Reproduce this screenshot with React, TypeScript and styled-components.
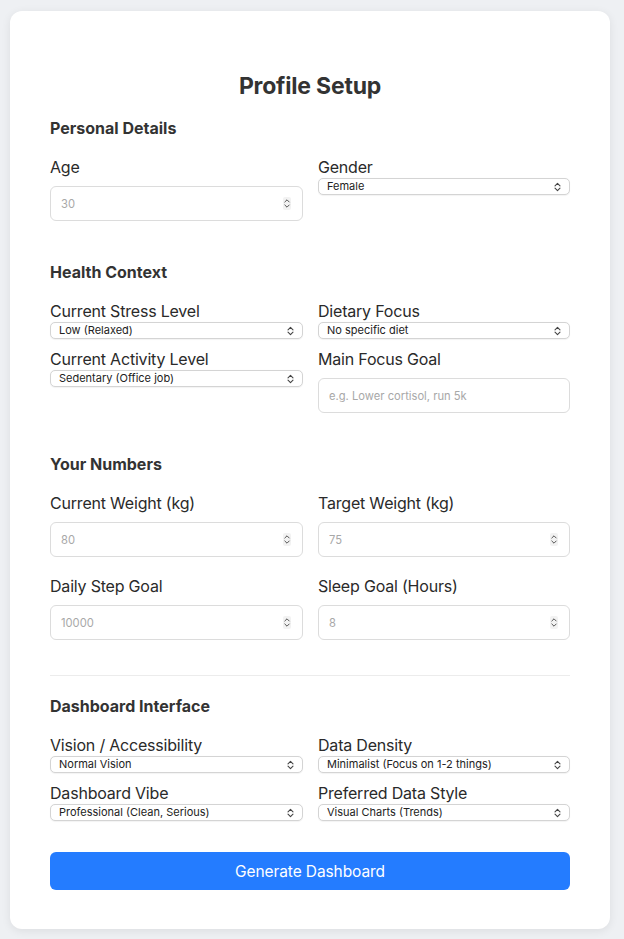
import React from "react";
import styled, { createGlobalStyle } from "styled-components";

const Global = createGlobalStyle`
  html, body { margin: 0; padding: 0; }
  body {
    background: #eef0f3;
    font-family: Inter, "Noto Sans", "Liberation Sans", sans-serif;
    color: #333;
  }
  * { box-sizing: border-box; }
`;

const Page = styled.div`
  padding: 11px 14px 10px 10px;
`;

const Card = styled.div`
  width: 600px;
  background: #fff;
  border-radius: 12px;
  box-shadow: 0 2px 10px rgba(0, 0, 0, 0.08);
  padding: 40px 40px 39px;
`;

const Title = styled.h2`
  margin: 20px 0 17px;
  font-size: 23px;
  line-height: 30px;
  font-weight: 700;
  text-align: center;
  color: #333;
  letter-spacing: -0.2px;
`;

const Section = styled.section<{ $last?: boolean }>`
  margin-bottom: ${(p) => (p.$last ? "31px" : "32px")};
`;

const SectionTitle = styled.h3`
  margin: 0 0 19px;
  font-size: 16px;
  line-height: 20px;
  font-weight: 700;
  color: #333;
`;

const Grid = styled.div`
  display: grid;
  grid-template-columns: 253px 252px;
  column-gap: 15px;
  row-gap: 10px;
  align-items: start;
`;

const Field = styled.div`
  display: flex;
  flex-direction: column;
`;

const Label = styled.label`
  display: block;
  font-size: 16px;
  line-height: 20px;
  color: #2a2a2a;
  letter-spacing: -0.2px;
`;

const SelectBox = styled.div`
  margin-top: 1px;
  height: 17px;
  border: 1px solid #d4d4d4;
  border-radius: 5px;
  background: #fff;
  display: flex;
  align-items: center;
  padding: 0 8px 0 8px;
  box-shadow: 0 0.5px 1px rgba(0, 0, 0, 0.05);
`;

const NativeSelect = styled.select`
  appearance: none;
  -webkit-appearance: none;
  border: none;
  background: transparent;
  outline: none;
  flex: 1;
  min-width: 0;
  padding: 0;
  margin: 0;
  font-family: Inter, "Noto Sans", "Liberation Sans", sans-serif;
  font-size: 11px;
  line-height: 15px;
  height: 15px;
  color: #222;
`;

const InputBox = styled.div`
  margin: 9px 0 9px;
  height: 35px;
  border: 1px solid #dcdcdc;
  border-radius: 6px;
  background: #fff;
  display: flex;
  align-items: center;
  padding: 0 11px 0 10px;
`;

const TextInput = styled.input`
  border: none;
  outline: none;
  background: transparent;
  flex: 1;
  min-width: 0;
  padding: 0;
  font-family: Inter, "Noto Sans", "Liberation Sans", sans-serif;
  font-size: 11.2px;
  color: #222;
  &::placeholder { color: #a8a8a8; }
  &::-webkit-inner-spin-button,
  &::-webkit-outer-spin-button { -webkit-appearance: none; margin: 0; }
`;

const Divider = styled.hr`
  border: none;
  border-top: 1px solid #ececec;
  margin: -6px 0 20px;
`;

const Button = styled.button`
  display: block;
  width: 100%;
  height: 38px;
  border: none;
  border-radius: 6px;
  background: #247cff;
  color: #fff;
  font-family: Inter, "Noto Sans", "Liberation Sans", sans-serif;
  font-size: 15.5px;
  letter-spacing: -0.1px;
`;

const Chevrons = ({ color = "#444" }: { color?: string }) => (
  <svg width="7" height="10" viewBox="0 0 7 10" fill="none">
    <path d="M1 3.8 L3.5 1.3 L6 3.8" stroke={color} strokeWidth="1.1" strokeLinecap="round" strokeLinejoin="round" />
    <path d="M1 6.2 L3.5 8.7 L6 6.2" stroke={color} strokeWidth="1.1" strokeLinecap="round" strokeLinejoin="round" />
  </svg>
);

const SpinIcon = () => (
  <svg width="8" height="13" viewBox="0 0 8 13" fill="none">
    <rect x="0" y="0" width="8" height="13" rx="2" fill="#f2f2f2" />
    <path d="M1.8 5 L4 2.8 L6.2 5" stroke="#555" strokeWidth="1" strokeLinecap="round" strokeLinejoin="round" />
    <path d="M1.8 8 L4 10.2 L6.2 8" stroke="#555" strokeWidth="1" strokeLinecap="round" strokeLinejoin="round" />
  </svg>
);

const SelectField = ({ label, options }: { label: string; options: string[] }) => (
  <Field>
    <Label>{label}</Label>
    <SelectBox>
      <NativeSelect defaultValue={options[0]}>
        {options.map((o) => (
          <option key={o}>{o}</option>
        ))}
      </NativeSelect>
      <Chevrons />
    </SelectBox>
  </Field>
);

const NumberField = ({ label, placeholder }: { label: string; placeholder: string }) => (
  <Field>
    <Label>{label}</Label>
    <InputBox>
      <TextInput type="number" placeholder={placeholder} />
      <SpinIcon />
    </InputBox>
  </Field>
);

const TextField = ({ label, placeholder }: { label: string; placeholder: string }) => (
  <Field>
    <Label>{label}</Label>
    <InputBox>
      <TextInput type="text" placeholder={placeholder} />
    </InputBox>
  </Field>
);

export default function App() {
  return (
    <>
      <Global />
      <Page>
        <Card>
          <Title>Profile Setup</Title>

          <Section>
            <SectionTitle>Personal Details</SectionTitle>
            <Grid>
              <NumberField label="Age" placeholder="30" />
              <SelectField label="Gender" options={["Female", "Male", "Other"]} />
            </Grid>
          </Section>

          <Section>
            <SectionTitle>Health Context</SectionTitle>
            <Grid>
              <SelectField label="Current Stress Level" options={["Low (Relaxed)", "Medium", "High"]} />
              <SelectField label="Dietary Focus" options={["No specific diet", "Keto", "Vegan"]} />
              <SelectField label="Current Activity Level" options={["Sedentary (Office job)", "Active"]} />
              <TextField label="Main Focus Goal" placeholder="e.g. Lower cortisol, run 5k" />
            </Grid>
          </Section>

          <Section>
            <SectionTitle>Your Numbers</SectionTitle>
            <Grid>
              <NumberField label="Current Weight (kg)" placeholder="80" />
              <NumberField label="Target Weight (kg)" placeholder="75" />
              <NumberField label="Daily Step Goal" placeholder="10000" />
              <NumberField label="Sleep Goal (Hours)" placeholder="8" />
            </Grid>
          </Section>

          <Divider />

          <Section $last>
            <SectionTitle>Dashboard Interface</SectionTitle>
            <Grid>
              <SelectField label="Vision / Accessibility" options={["Normal Vision", "Low Vision"]} />
              <SelectField label="Data Density" options={["Minimalist (Focus on 1-2 things)", "Detailed"]} />
              <SelectField label="Dashboard Vibe" options={["Professional (Clean, Serious)", "Playful"]} />
              <SelectField label="Preferred Data Style" options={["Visual Charts (Trends)", "Numbers"]} />
            </Grid>
          </Section>

          <Button>Generate Dashboard</Button>
        </Card>
      </Page>
    </>
  );
}
